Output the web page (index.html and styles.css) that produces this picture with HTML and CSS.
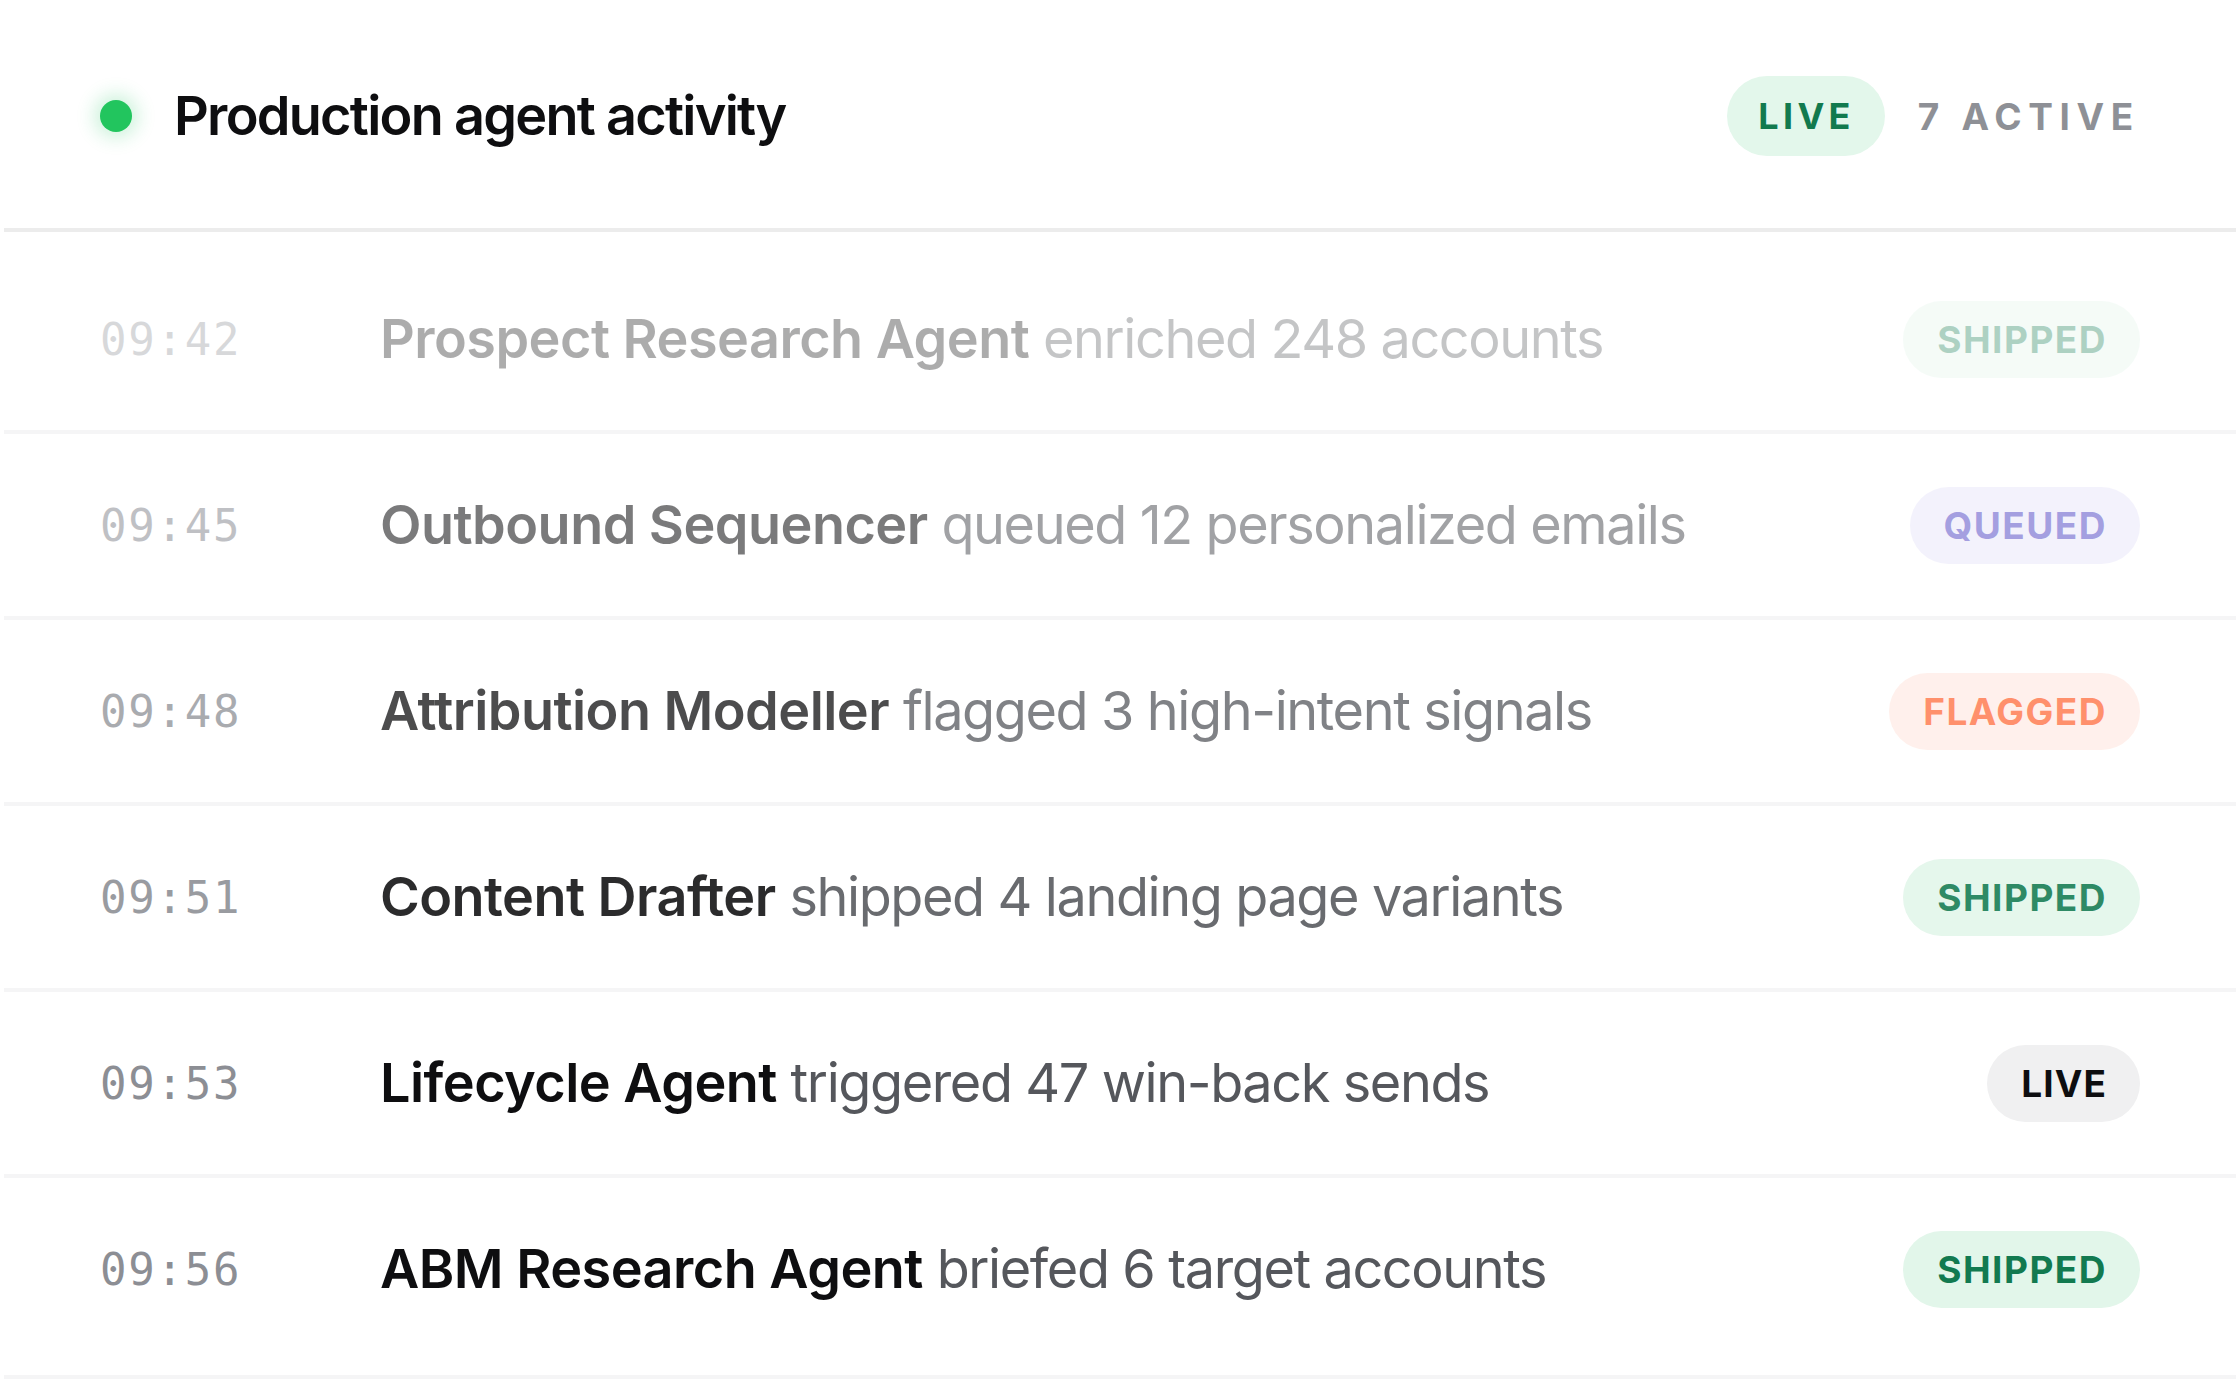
FILE: index.html
```html
<!DOCTYPE html>
<html lang="en">
<head>
<meta charset="utf-8">
<title>Production agent activity</title>
<link rel="stylesheet" href="styles.css">
</head>
<body>
<section class="feed">
  <header class="feed-head">
    <div class="head-left">
      <span class="live-dot"></span>
      <h1 class="title">Production agent activity</h1>
    </div>
    <div class="head-right">
      <span class="pill pill-live-head">LIVE</span>
      <span class="active-count">7 ACTIVE</span>
    </div>
  </header>
  <ul class="rows">
    <li class="row fade-1">
      <span class="time">09:42</span>
      <p class="msg"><strong class="agent">Prospect Research Agent</strong> enriched 248 accounts</p>
      <span class="pill pill-shipped">SHIPPED</span>
    </li>
    <li class="row fade-2">
      <span class="time">09:45</span>
      <p class="msg"><strong class="agent">Outbound Sequencer</strong> queued 12 personalized emails</p>
      <span class="pill pill-queued">QUEUED</span>
    </li>
    <li class="row fade-3">
      <span class="time">09:48</span>
      <p class="msg"><strong class="agent">Attribution Modeller</strong> flagged 3 high-intent signals</p>
      <span class="pill pill-flagged">FLAGGED</span>
    </li>
    <li class="row fade-4">
      <span class="time">09:51</span>
      <p class="msg"><strong class="agent">Content Drafter</strong> shipped 4 landing page variants</p>
      <span class="pill pill-shipped">SHIPPED</span>
    </li>
    <li class="row fade-5">
      <span class="time">09:53</span>
      <p class="msg"><strong class="agent">Lifecycle Agent</strong> triggered 47 win-back sends</p>
      <span class="pill pill-live">LIVE</span>
    </li>
    <li class="row">
      <span class="time">09:56</span>
      <p class="msg"><strong class="agent">ABM Research Agent</strong> briefed 6 target accounts</p>
      <span class="pill pill-shipped">SHIPPED</span>
    </li>
  </ul>
</section>
</body>
</html>
```

FILE: styles.css
```css
* { box-sizing: border-box; }

html, body {
  margin: 0;
  padding: 0;
  background: #ffffff;
}

body {
  font-family: "Inter", "Noto Sans", "Liberation Sans", sans-serif;
  color: #0e0e10;
  -webkit-font-smoothing: antialiased;
}

.feed {
  margin: 0 4px;
}

.feed-head {
  height: 232px;
  padding: 4px 96px 0 96px;
  display: flex;
  align-items: center;
  justify-content: space-between;
  border-bottom: 4px solid #ececec;
}

.head-left {
  display: flex;
  align-items: center;
  gap: 42px;
}

.live-dot {
  width: 32px;
  height: 32px;
  border-radius: 50%;
  background: #22c55e;
  box-shadow: 0 0 18px 6px rgba(34, 197, 94, 0.22);
  flex: none;
}

.title {
  margin: 0;
  font-size: 54px;
  font-weight: 600;
  letter-spacing: -0.032em;
  color: #0e0e10;
  line-height: 1.2;
}

.head-right {
  display: flex;
  align-items: center;
  gap: 33px;
}

.pill {
  display: inline-flex;
  align-items: center;
  justify-content: center;
  height: 77px;
  padding: 0 33px 0 34px;
  border-radius: 40px;
  font-size: 37px;
  font-weight: 700;
  letter-spacing: 0.04em;
  line-height: 1;
  flex: none;
}

.pill-live-head {
  height: 80px;
  padding: 0 30px 0 31px;
  font-size: 36px;
  letter-spacing: 0.12em;
  background: #e3f7eb;
  color: #127a4e;
}

.active-count {
  font-size: 37px;
  font-weight: 700;
  letter-spacing: 0.18em;
  color: #8e9096;
}

.rows {
  list-style: none;
  margin: 0;
  padding: 16px 0 0 0;
}

.row {
  display: flex;
  align-items: center;
  height: 186px;
  padding: 0 96px;
  border-bottom: 4px solid #f5f5f6;
}

.row:last-child {
  height: 201px;
  padding-bottom: 15px;
}

.fade-1 > * { opacity: 0.34; }
.fade-2 > * { opacity: 0.55; }
.fade-3 > * { opacity: 0.74; }
.fade-4 > * { opacity: 0.88; }
.fade-5 > * { opacity: 1; }

.time {
  width: 280px;
  flex: none;
  font-family: "DejaVu Sans Mono", "Liberation Mono", monospace;
  font-size: 44px;
  letter-spacing: 0.04em;
  color: #8c8e94;
}

.msg {
  margin: 0;
  flex: 1;
  min-width: 0;
  font-size: 54px;
  font-weight: 400;
  letter-spacing: -0.026em;
  color: #55575c;
  white-space: nowrap;
  line-height: 1.2;
}

.agent {
  font-weight: 600;
  letter-spacing: -0.01em;
  color: #0e0e10;
}

.pill-shipped {
  background: #e2f6ea;
  color: #127a50;
}

.pill-queued {
  background: #ebe9fb;
  color: #5b52c7;
}

.pill-flagged {
  background: #ffece6;
  color: #ff6a3a;
}

.pill-live {
  background: #f0f0f1;
  color: #0e0e10;
  letter-spacing: 0.03em;
}
```
